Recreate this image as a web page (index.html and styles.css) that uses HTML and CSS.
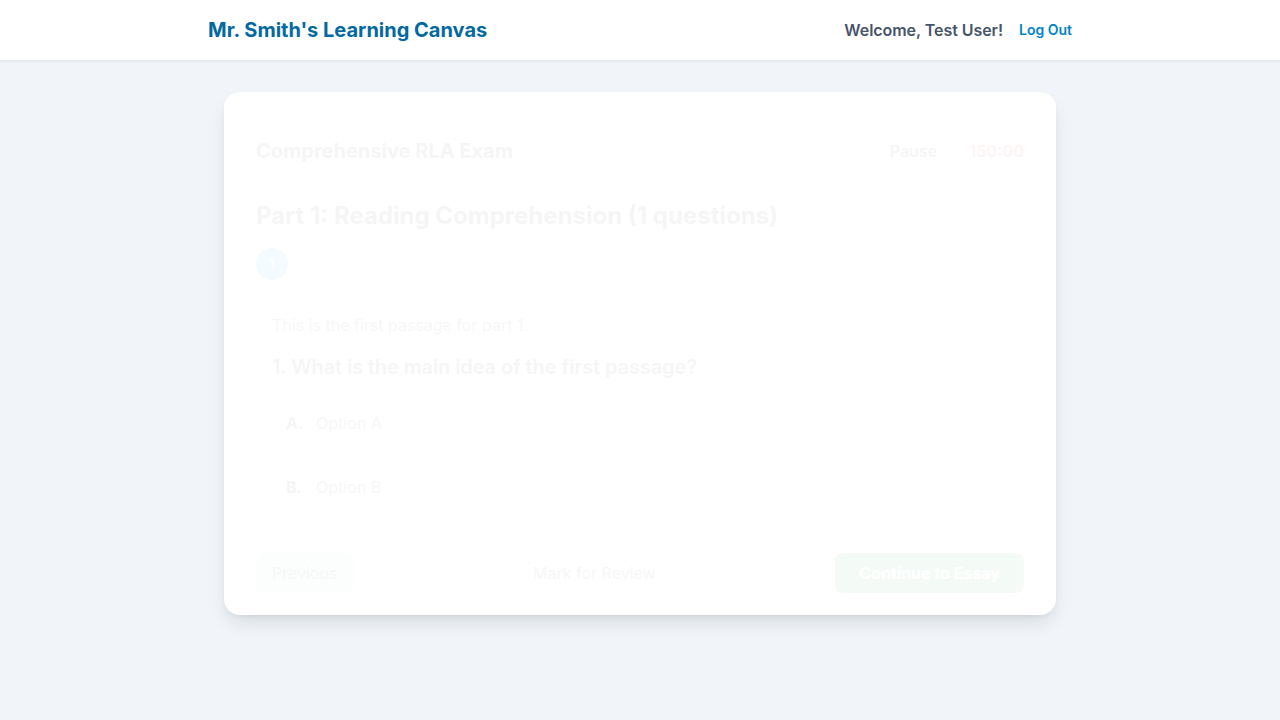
FILE: index.html
```html
<!DOCTYPE html>
<html lang="en">
<head>
<meta charset="utf-8">
<title>Mr. Smith's Learning Canvas</title>
<link rel="stylesheet" href="styles.css">
</head>
<body>
<header class="topbar">
  <div class="topbar-inner">
    <h1 class="brand">Mr. Smith's Learning Canvas</h1>
    <div class="user">
      <span class="welcome">Welcome, Test User!</span>
      <a class="logout" href="#">Log Out</a>
    </div>
  </div>
</header>
<main class="main">
  <section class="card">
    <div class="card-content">
      <div class="exam-head">
        <h2 class="exam-title">Comprehensive RLA Exam</h2>
        <div class="exam-tools">
          <button class="pause">Pause</button>
          <span class="timer">150:00</span>
        </div>
      </div>
      <h3 class="part-title">Part 1: Reading Comprehension (1 questions)</h3>
      <div class="nav-dots"><span class="dot">1</span></div>
      <div class="question-box">
        <p class="passage">This is the first passage for part 1.</p>
        <p class="question">1. What is the main idea of the first passage?</p>
        <div class="options">
          <label class="option"><span class="opt-letter">A.</span><span class="opt-text">Option A</span></label>
          <label class="option"><span class="opt-letter">B.</span><span class="opt-text">Option B</span></label>
        </div>
      </div>
      <div class="footer">
        <button class="btn btn-prev">Previous</button>
        <button class="btn btn-mark">Mark for Review</button>
        <button class="btn btn-next">Continue to Essay</button>
      </div>
    </div>
  </section>
</main>
</body>
</html>
```

FILE: styles.css
```css
* { box-sizing: border-box; }
html, body { margin: 0; padding: 0; }
body {
  background: #f1f5f9;
  font-family: Inter, "Noto Sans", "Liberation Sans", sans-serif;
  color: #1e293b;
  min-height: 720px;
}
h1, h2, h3, p { margin: 0; }
button { font-family: inherit; border: 0; background: none; cursor: pointer; }

.topbar {
  background: #ffffff;
  height: 61px;
  border-bottom: 1px solid #e5e9ef;
  box-shadow: 0 1px 2px rgba(15, 23, 42, 0.04);
}
.topbar-inner {
  width: 864px;
  margin: 0 auto;
  height: 60px;
  display: flex;
  align-items: center;
  justify-content: space-between;
}
.brand {
  font-size: 20px;
  font-weight: 700;
  color: #0369a1;
  line-height: 28px;
}
.user { display: flex; align-items: center; gap: 16px; }
.welcome { font-size: 16px; font-weight: 600; color: #475569; letter-spacing: -0.05px; }
.logout { font-size: 14px; font-weight: 600; color: #0284c7; text-decoration: none; line-height: 20px; margin-bottom: 1px; }

.main { padding-top: 31px; }
.card {
  width: 832px;
  margin: 0 auto;
  background: #ffffff;
  border-radius: 16px;
  box-shadow: 0 10px 20px -4px rgba(15, 23, 42, 0.12), 0 4px 8px -4px rgba(15, 23, 42, 0.08);
  padding: 32px 32px 22px;
}
.card-content { opacity: 0.04; }

.exam-head {
  display: flex;
  justify-content: space-between;
  align-items: center;
  padding: 7px 0 12px;
  border-bottom: 1px solid #e2e8f0;
}
.exam-title { font-size: 20px; font-weight: 700; line-height: 28px; color: #1e293b; }
.exam-tools { display: flex; align-items: center; gap: 32px; }
.pause { font-size: 16px; font-weight: 600; color: #1e293b; line-height: 24px; padding: 8px 0; }
.timer { font-size: 16px; font-weight: 700; color: #dc2626; }

.part-title { font-size: 24px; font-weight: 700; line-height: 32px; margin-top: 16px; color: #1e293b; }
.nav-dots { display: flex; gap: 8px; margin-top: 16px; }
.dot {
  width: 32px; height: 32px; border-radius: 50%;
  background: #0ea5e9; color: #ffffff;
  display: flex; align-items: center; justify-content: center;
  font-size: 14px; font-weight: 600;
}

.question-box { margin-top: 17px; padding: 16px; }
.passage { font-size: 16px; line-height: 24px; color: #334155; }
.question { font-size: 20px; font-weight: 600; line-height: 28px; margin-top: 16px; color: #1e293b; letter-spacing: -0.1px; }
.options { display: flex; flex-direction: column; gap: 12px; margin-top: 16px; }
.option {
  display: flex; align-items: center;
  border: 2px solid #ffffff;
  border-radius: 8px;
  padding: 12px;
  font-size: 16px; line-height: 24px;
}
.opt-letter { font-weight: 700; width: 30px; color: #1e293b; }
.opt-text { color: #334155; }

.footer {
  margin-top: 24px;
  display: flex;
  justify-content: space-between;
  align-items: center;
}
.btn { font-size: 16px; line-height: 24px; padding: 8px 16px; border-radius: 8px; }
.btn-prev { background: #cbd5e1; color: #334155; font-weight: 400; }
.btn-mark { color: #334155; font-weight: 400; }
.btn-next { background: #16a34a; color: #ffffff; font-weight: 700; padding: 8px 24px; }
```
